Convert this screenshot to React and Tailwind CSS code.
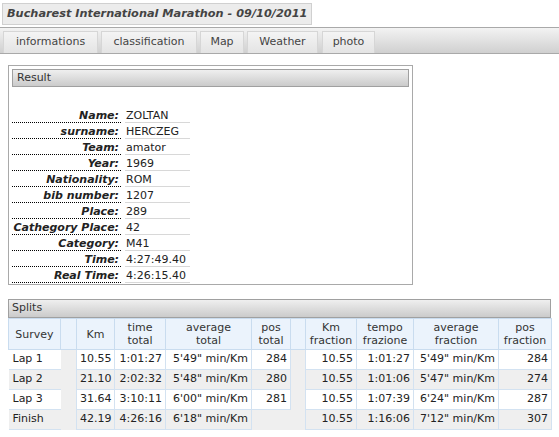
import React from 'react';

const info = [
  ['Name', 'ZOLTAN'],
  ['surname', 'HERCZEG'],
  ['Team', 'amator'],
  ['Year', '1969'],
  ['Nationality', 'ROM'],
  ['bib number', '1207'],
  ['Place', '289'],
  ['Cathegory Place', '42'],
  ['Category', 'M41'],
  ['Time', '4:27:49.40'],
  ['Real Time', '4:26:15.40'],
];

const tabs = [
  ['informations', 'w-[95px]'],
  ['classification', 'w-[96px]'],
  ['Map', 'w-[44px]'],
  ['Weather', 'w-[71px]'],
  ['photo', 'w-[53px]'],
];

const splits = [
  ['Lap 1', '10.55', '1:01:27', '5\'49" min/Km', '284', '10.55', '1:01:27', '5\'49" min/Km', '284'],
  ['Lap 2', '21.10', '2:02:32', '5\'48" min/Km', '280', '10.55', '1:01:06', '5\'47" min/Km', '274'],
  ['Lap 3', '31.64', '3:10:11', '6\'00" min/Km', '281', '10.55', '1:07:39', '6\'24" min/Km', '287'],
  ['Finish', '42.19', '4:26:16', '6\'18" min/Km', '', '10.55', '1:16:06', '7\'12" min/Km', '307'],
];

const th = 'border border-[#c9dcef] bg-[#ebf3fc] font-normal text-center leading-[13px] px-[2px]';

const App = () => {
  return (
    <div className="w-[559px] h-[437px] bg-white text-[#222] text-[11px] font-['DejaVu_Sans',sans-serif] overflow-hidden">
      <div className="pt-[3px] pl-[2px]">
        <div className="inline-flex items-center h-[22px] px-[4px] border border-[#d0d0d0] bg-[#ececec] text-[#444] text-[11.3px] font-bold italic">
          Bucharest International Marathon - 09/10/2011
        </div>
      </div>

      <div className="mt-[2px] h-[27px] border-t border-b border-[#a9a9a9] bg-gradient-to-b from-[#f3f3f3] to-[#d0d0d0] flex items-end gap-[3px] pl-[3px]">
        {tabs.map(([t, w], i) => (
          <div
            key={t}
            className={`${w} h-[22px] flex items-center justify-center border-t border-l border-r border-[#d6d6d6] bg-gradient-to-b from-[#f4f4f4] to-[#e4e4e4] text-[#444] ${i === 4 ? 'ml-[1px]' : ''}`}
          >
            {t}
          </div>
        ))}
      </div>

      <div className="mt-[11px] ml-[8px] w-[405px] h-[220px] border border-[#a9a9a9] p-[3px]">
        <div className="h-[18px] border border-[#a0a0a0] bg-gradient-to-b from-[#efefef] to-[#cbcbcb] flex items-center pl-[4px] text-[#333]">
          Result
        </div>
        <div className="mt-[20px]">
          {info.map(([k, v]) => (
            <div key={k} className="flex h-[16px] gap-[4px]">
              <div className="w-[109px] border-b border-dotted border-black text-right font-bold italic pr-[2px] leading-[17px] text-[#222] whitespace-nowrap">
                {k}:
              </div>
              <div className="w-[65px] border-b border-[#d8d8d8] leading-[17px] pl-[1px]">{v}</div>
            </div>
          ))}
        </div>
      </div>

      <div className="mt-[14px] ml-[8px] w-[543px]">
        <div className="h-[19px] border border-[#a0a0a0] bg-gradient-to-b from-[#efefef] to-[#cbcbcb] flex items-center pl-[3px] text-[#333]">
          Splits
        </div>
        <table className="w-[543px] table-fixed border-collapse">
          <colgroup>
            <col className="w-[52px]" />
            <col className="w-[16px]" />
            <col className="w-[38px]" />
            <col className="w-[51px]" />
            <col className="w-[86px]" />
            <col className="w-[39px]" />
            <col className="w-[15px]" />
            <col className="w-[51px]" />
            <col className="w-[57px]" />
            <col className="w-[85px]" />
            <col className="w-[53px]" />
          </colgroup>
          <thead>
            <tr className="h-[31px] text-[#333]">
              <th className={th}>Survey</th>
              <th className={th}></th>
              <th className={th}>Km</th>
              <th className={th}>time<br />total</th>
              <th className={th}>average<br />total</th>
              <th className={th}>pos<br />total</th>
              <th className={th}></th>
              <th className={th}>Km<br />fraction</th>
              <th className={th}>tempo<br />frazione</th>
              <th className={th}>average<br />fraction</th>
              <th className={th}>pos<br />fraction</th>
            </tr>
          </thead>
          <tbody>
            {splits.map((r, i) => {
              const bg = i % 2 === 1 ? 'bg-[#efefef]' : 'bg-white';
              const td = `border border-[#d3e2f1] ${bg} text-right px-[3px] whitespace-nowrap`;
              return (
                <tr key={r[0]} className="h-[20px]">
                  <td className={`border-b border-[#d3e2f1] ${bg} text-left pl-[4px]`}>{r[0]}</td>
                  <td className="bg-[#efefef]"></td>
                  <td className={td}>{r[1]}</td>
                  <td className={td}>{r[2]}</td>
                  <td className={td}>{r[3]}</td>
                  <td className={r[4] ? td : 'bg-[#efefef]'}>{r[4]}</td>
                  <td className="bg-[#efefef]"></td>
                  <td className={td}>{r[5]}</td>
                  <td className={td}>{r[6]}</td>
                  <td className={td}>{r[7]}</td>
                  <td className={td}>{r[8]}</td>
                </tr>
              );
            })}
          </tbody>
        </table>
      </div>
    </div>
  );
};

export default App;
